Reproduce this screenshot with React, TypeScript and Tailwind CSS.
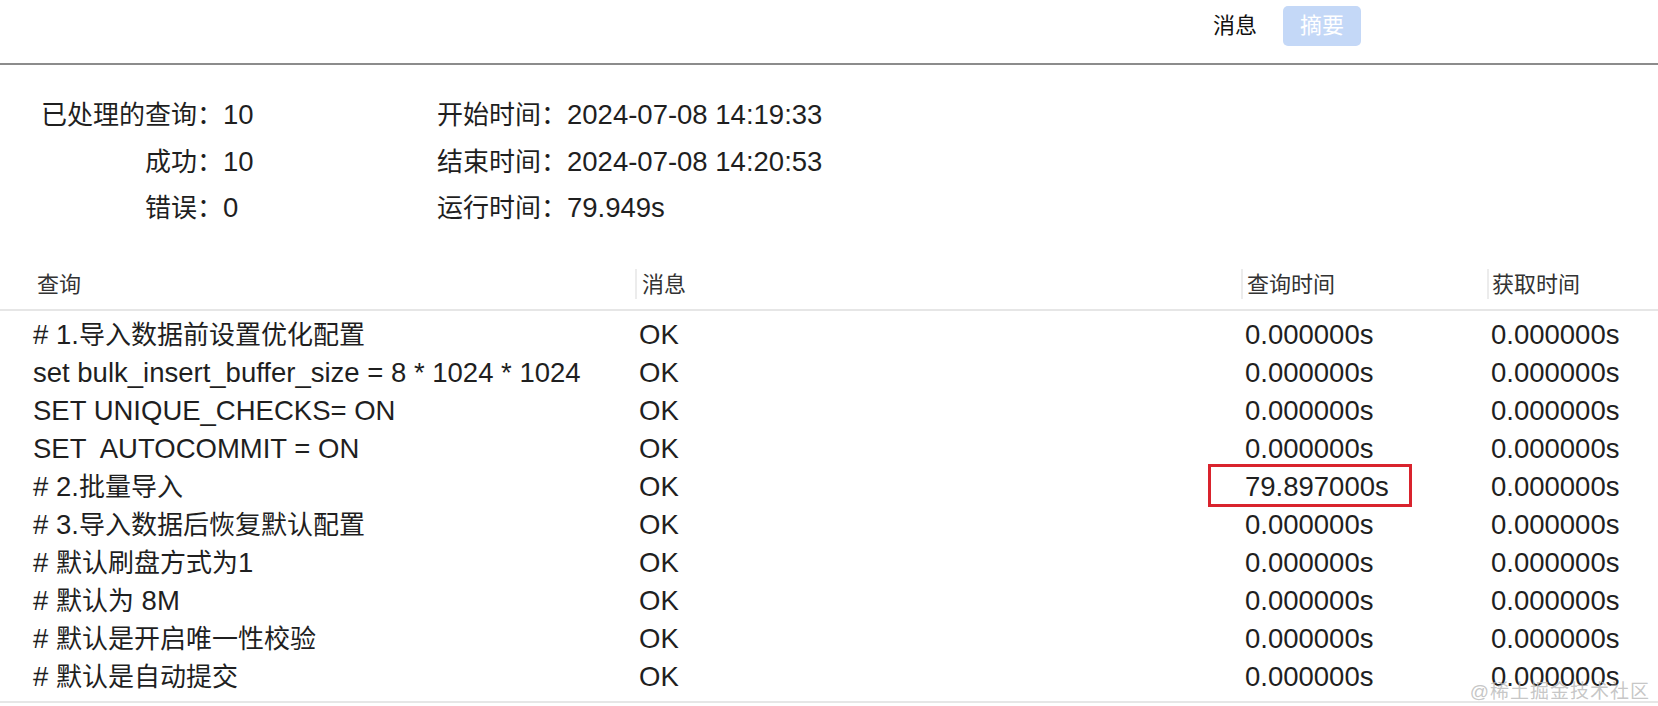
import React from "react";

interface QueryRow {
  query: string;
  message: string;
  queryTime: string;
  fetchTime: string;
  highlight?: boolean;
}

const rows: QueryRow[] = [
  { query: "# 1.导入数据前设置优化配置", message: "OK", queryTime: "0.000000s", fetchTime: "0.000000s" },
  { query: "set bulk_insert_buffer_size = 8 * 1024 * 1024", message: "OK", queryTime: "0.000000s", fetchTime: "0.000000s" },
  { query: "SET UNIQUE_CHECKS= ON", message: "OK", queryTime: "0.000000s", fetchTime: "0.000000s" },
  { query: "SET  AUTOCOMMIT = ON", message: "OK", queryTime: "0.000000s", fetchTime: "0.000000s" },
  { query: "# 2.批量导入", message: "OK", queryTime: "79.897000s", fetchTime: "0.000000s", highlight: true },
  { query: "# 3.导入数据后恢复默认配置", message: "OK", queryTime: "0.000000s", fetchTime: "0.000000s" },
  { query: "# 默认刷盘方式为1", message: "OK", queryTime: "0.000000s", fetchTime: "0.000000s" },
  { query: "# 默认为 8M", message: "OK", queryTime: "0.000000s", fetchTime: "0.000000s" },
  { query: "# 默认是开启唯一性校验", message: "OK", queryTime: "0.000000s", fetchTime: "0.000000s" },
  { query: "# 默认是自动提交", message: "OK", queryTime: "0.000000s", fetchTime: "0.000000s" },
];

const summaryLeft = [
  { label: "已处理的查询：", value: "10" },
  { label: "成功：", value: "10" },
  { label: "错误：", value: "0" },
];

const summaryRight = [
  { label: "开始时间：", value: "2024-07-08 14:19:33" },
  { label: "结束时间：", value: "2024-07-08 14:20:53" },
  { label: "运行时间：", value: "79.949s" },
];

const cols = "grid grid-cols-[635px_606px_246px_171px]";

// CJK glyphs in the original render a bit smaller than the latin ones
const Mixed: React.FC<{ text: string }> = ({ text }) => {
  const parts = text.split(/([\u3000-\u303f\u4e00-\u9fff\uff00-\uffef]+)/);
  return (
    <>
      {parts.map((p, i) =>
        i % 2 === 1 ? (
          <span key={i} className="text-[26px]">
            {p}
          </span>
        ) : (
          <React.Fragment key={i}>{p}</React.Fragment>
        ),
      )}
    </>
  );
};

export default function App() {
  return (
    <div className="relative w-[1658px] h-[706px] overflow-hidden bg-white text-[#1f1f1f] font-['Liberation_Sans','Noto_Sans_CJK_SC',sans-serif]">
      {/* Toolbar */}
      <div className="h-[65px] border-b-2 border-[#8c8c8c] flex items-start justify-end pr-[297px] pt-[6px]">
        <div className="flex items-center gap-[26px] h-[40px]">
          <span className="text-[22px] leading-none text-[#111]">消息</span>
          <button className="w-[78px] h-[40px] rounded-[5px] bg-[#c4d8f7] text-white text-[22px] leading-none flex items-center justify-center">
            摘要
          </button>
        </div>
      </div>

      {/* Summary */}
      <div className="flex pt-[27px] text-[27.5px] leading-[46.5px]">
        <div className="w-[437px] flex flex-col">
          {summaryLeft.map((item) => (
            <div key={item.label} className="flex">
              <span className="w-[223px] text-right whitespace-nowrap">
                <Mixed text={item.label} />
              </span>
              <span>{item.value}</span>
            </div>
          ))}
        </div>
        <div className="flex flex-col">
          {summaryRight.map((item) => (
            <div key={item.label} className="flex">
              <span className="w-[130px] whitespace-nowrap">
                <Mixed text={item.label} />
              </span>
              <span>{item.value}</span>
            </div>
          ))}
        </div>
      </div>

      {/* Table header */}
      <div className={`${cols} mt-[28px] h-[51px] border-b-2 border-[#e6e6e6] items-center text-[22px] text-[#333]`}>
        <div className="pl-[37px]">查询</div>
        <div className="flex items-center h-[30px] border-l-2 border-[#ececec] pl-[5px]">消息</div>
        <div className="flex items-center h-[30px] border-l-2 border-[#ececec] pl-[4px]">查询时间</div>
        <div className="flex items-center h-[30px] border-l-2 border-[#ececec] pl-[3px]">获取时间</div>
      </div>

      {/* Table body */}
      <div className="pt-[5px] pb-[5px] border-b-2 border-[#e6e6e6] text-[27.5px]">
        {rows.map((row, i) => (
          <div key={i} className={`${cols} h-[38px] items-center leading-[38px] whitespace-pre`}>
            <div className="pl-[33px]">
              <Mixed text={row.query} />
            </div>
            <div className="pl-[4px]">{row.message}</div>
            <div className="relative pl-[4px]">
              {row.queryTime}
              {row.highlight && (
                <div className="absolute left-[-33px] top-[-4px] w-[204px] h-[43px] border-[3px] border-[#d9232d]" />
              )}
            </div>
            <div className="pl-[4px]">{row.fetchTime}</div>
          </div>
        ))}
      </div>

      {/* Watermark */}
      <div className="absolute right-[8px] bottom-[5px] text-[19px] leading-none text-[#b8b8b8]/80 tracking-[1px]">
        @稀土掘金技术社区
      </div>
    </div>
  );
}
